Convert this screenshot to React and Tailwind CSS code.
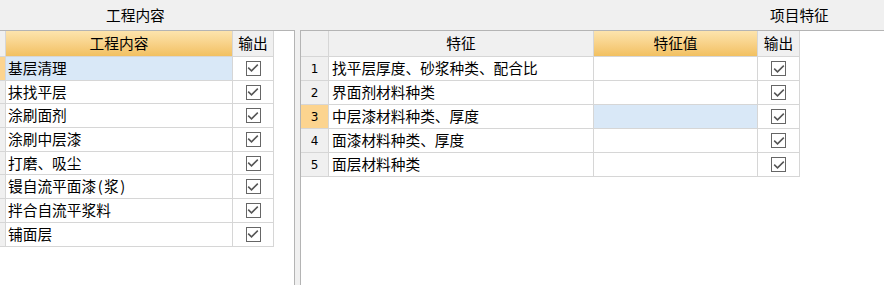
import React from "react";

const FONT = { fontFamily: '"Microsoft YaHei", "Noto Sans CJK SC", "Noto Sans", sans-serif' };

function Check() {
  return (
    <div className="w-[15px] h-[15px] border-[1.5px] border-[#666666] bg-white flex items-center justify-center">
      <svg width="12" height="12" viewBox="0 0 12 12">
        <polyline points="1.2,5.6 4.5,8.9 10.8,2.6" fill="none" stroke="#555555" strokeWidth="1.5" />
      </svg>
    </div>
  );
}

const leftRows = ["基层清理", "抹找平层", "涂刷面剂", "涂刷中层漆", "打磨、吸尘", "镘自流平面漆(浆)", "拌合自流平浆料", "铺面层"];
const rightRows = ["找平层厚度、砂浆种类、配合比", "界面剂材料种类", "中层漆材料种类、厚度", "面漆材料种类、厚度", "面层材料种类"];

function LeftText({ text }) {
  if (text.includes("(")) {
    const [a, rest] = text.split("(");
    const [b] = rest.split(")");
    return (
      <span>
        {a}
        <span className="px-[1.5px]">(</span>
        {b}
        <span className="px-[1.5px]">)</span>
      </span>
    );
  }
  return <span>{text}</span>;
}

export default function App() {
  return (
    <div className="w-[884px] h-[285px] bg-[#f0f0f0] flex flex-col text-black overflow-hidden" style={FONT}>
      <div className="h-[30px] shrink-0 flex items-center text-[14.7px] leading-none">
        <div className="pl-[106px] w-[770px]">工程内容</div>
        <div>项目特征</div>
      </div>
      <div className="flex flex-1 min-h-0">
        <div className="w-[295px] shrink-0 bg-white border-t border-r border-[#b4b4b4]">
          <div className="w-[274px] text-[14.7px] leading-none">
            <div className="flex h-[26px]">
              <div className="w-[6px] bg-[#f0f0f0] border-r border-b border-[#d6d6d6]" />
              <div className="w-[227px] bg-linear-to-b from-[#fde4ad] to-[#f2c060] border-r border-b border-[#d6d6d6] flex items-center justify-center">工程内容</div>
              <div className="w-[41px] bg-[#f0f0f0] border-r border-b border-[#d6d6d6] flex items-center justify-center">输出</div>
            </div>
            {leftRows.map((r, i) => (
              <div key={i} className="flex h-[23.7px]">
                <div className={`w-[6px] border-r border-b border-[#d6d6d6] ${i === 0 ? "bg-[#fcd48f]" : "bg-[#f0f0f0]"}`} />
                <div className={`w-[227px] border-r border-b border-[#d6d6d6] flex items-center pl-[2px] ${i === 0 ? "bg-[#d9e8f7]" : "bg-white"}`}><LeftText text={r} /></div>
                <div className="w-[41px] border-r border-b border-[#d6d6d6] flex items-center justify-center"><Check /></div>
              </div>
            ))}
          </div>
        </div>
        <div className="w-[5px] shrink-0 bg-[#f0f0f0]" />
        <div className="flex-1 bg-white border-t border-l border-[#b4b4b4]">
          <div className="w-[499px] text-[14.7px] leading-none">
            <div className="flex h-[26px]">
              <div className="w-[28px] bg-[#f0f0f0] border-r border-b border-[#d6d6d6]" />
              <div className="w-[265px] bg-[#f0f0f0] border-r border-b border-[#d6d6d6] flex items-center justify-center">特征</div>
              <div className="w-[164px] bg-linear-to-b from-[#fde4ad] to-[#f2c060] border-r border-b border-[#d6d6d6] flex items-center justify-center">特征值</div>
              <div className="w-[42px] bg-[#f0f0f0] border-r border-b border-[#d6d6d6] flex items-center justify-center">输出</div>
            </div>
            {rightRows.map((r, i) => (
              <div key={i} className="flex h-[24px]">
                <div className={`w-[28px] border-r border-b border-[#d6d6d6] flex items-center justify-center text-[12px] ${i === 2 ? "bg-[#fcd48f]" : "bg-[#f0f0f0]"}`} style={{ fontFamily: '"DejaVu Sans", sans-serif' }}>{i + 1}</div>
                <div className="w-[265px] border-r border-b border-[#d6d6d6] flex items-center pl-[3px] bg-white">{r}</div>
                <div className={`w-[164px] border-r border-b border-[#d6d6d6] ${i === 2 ? "bg-[#d9e8f7]" : "bg-white"}`} />
                <div className="w-[42px] border-r border-b border-[#d6d6d6] flex items-center justify-center"><Check /></div>
              </div>
            ))}
          </div>
        </div>
      </div>
    </div>
  );
}
